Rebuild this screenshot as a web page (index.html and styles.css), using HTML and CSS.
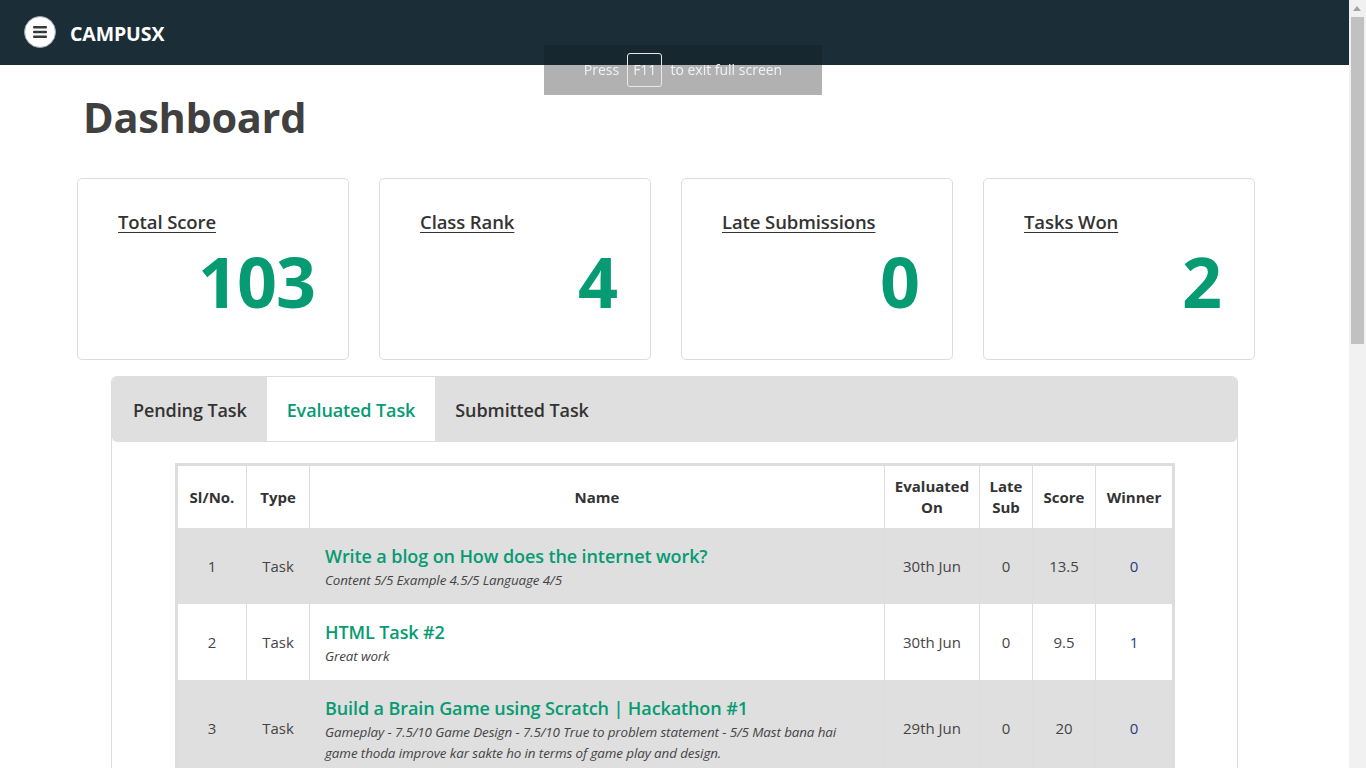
FILE: index.html
```html
<!DOCTYPE html>
<html lang="en">
<head>
<meta charset="utf-8">
<title>CampusX Dashboard</title>
<link rel="stylesheet" href="styles.css">
</head>
<body>
<header class="topbar">
  <span class="menu-btn">
    <svg width="32" height="32" viewBox="0 0 32 32"><circle cx="16" cy="16" r="15.5" fill="#fff" stroke="#9aa3a8" stroke-width="1"/><rect x="9" y="10" width="14" height="2.4" rx="1" fill="#3a3a3a"/><rect x="9" y="14.8" width="14" height="2.4" rx="1" fill="#3a3a3a"/><rect x="9" y="19.6" width="14" height="2.4" rx="1" fill="#3a3a3a"/></svg>
  </span>
  <span class="brand">CAMPUSX</span>
</header>

<main class="page">
  <h1 class="title">Dashboard</h1>

  <section class="cards">
    <div class="card"><a class="card-label">Total Score</a><div class="card-value">103</div></div>
    <div class="card"><a class="card-label">Class Rank</a><div class="card-value">4</div></div>
    <div class="card"><a class="card-label">Late Submissions</a><div class="card-value">0</div></div>
    <div class="card"><a class="card-label">Tasks Won</a><div class="card-value">2</div></div>
  </section>

  <section class="panel">
    <nav class="tabs">
      <span class="tab">Pending Task</span>
      <span class="tab active">Evaluated Task</span>
      <span class="tab">Submitted Task</span>
    </nav>
    <div class="panel-body">
      <table class="tasks">
        <colgroup>
          <col class="c-sl"><col class="c-type"><col class="c-name"><col class="c-eval"><col class="c-late"><col class="c-score"><col class="c-win">
        </colgroup>
        <thead>
          <tr><th>Sl/No.</th><th>Type</th><th>Name</th><th>Evaluated On</th><th>Late Sub</th><th>Score</th><th>Winner</th></tr>
        </thead>
        <tbody>
          <tr class="odd">
            <td>1</td><td>Task</td>
            <td class="name"><a class="task-title">Write a blog on How does the internet work?</a><div class="task-note">Content 5/5 Example 4.5/5 Language 4/5</div></td>
            <td>30th Jun</td><td>0</td><td>13.5</td><td class="win">0</td>
          </tr>
          <tr>
            <td>2</td><td>Task</td>
            <td class="name"><a class="task-title">HTML Task #2</a><div class="task-note">Great work</div></td>
            <td>30th Jun</td><td>0</td><td>9.5</td><td class="win">1</td>
          </tr>
          <tr class="odd">
            <td>3</td><td>Task</td>
            <td class="name"><a class="task-title">Build a Brain Game using Scratch | Hackathon #1</a><div class="task-note">Gameplay - 7.5/10 Game Design - 7.5/10 True to problem statement - 5/5 Mast bana hai game thoda improve kar sakte ho in terms of game play and design.</div></td>
            <td>29th Jun</td><td>0</td><td>20</td><td class="win">0</td>
          </tr>
        </tbody>
      </table>
    </div>
  </section>
</main>

<div class="fs-toast">Press <span class="key">F11</span> to exit full screen</div>

<div class="scrollbar"><span class="sb-arrow"></span><span class="sb-thumb"></span></div>
</body>
</html>
```

FILE: styles.css
```css
html, body {
  margin: 0;
  padding: 0;
  overflow: hidden;
  height: 100%;
}
body {
  font-family: "Open Sans", "Liberation Sans", sans-serif;
  color: #333;
  background: #fff;
  width: 1349px;
}

.topbar {
  height: 65px;
  background: #1b2d36;
  display: flex;
  align-items: center;
  padding-left: 24px;
  box-sizing: border-box;
}
.menu-btn {
  display: flex;
  width: 32px;
  height: 32px;
  margin-top: -2px;
}
.brand {
  color: #fff;
  font-weight: 700;
  font-size: 19.5px;
  letter-spacing: -0.1px;
  margin-left: 14px;
  margin-top: 1px;
}

.page {
  padding-left: 77px;
}
.title {
  margin: 0;
  padding: 26px 0 0 6px;
  font-size: 41.5px;
  font-weight: 700;
  color: #404040;
  line-height: 52px;
  letter-spacing: -0.3px;
}

.cards {
  display: flex;
  gap: 30px;
  margin-top: 35px;
}
.card {
  width: 272px;
  height: 182px;
  box-sizing: border-box;
  border: 1px solid #dcdcdc;
  border-radius: 5px;
  padding: 30px 33px 0 40px;
  display: flex;
  flex-direction: column;
}
.card-label {
  font-size: 18.5px;
  font-weight: 600;
  color: #333;
  text-decoration: underline;
  text-underline-offset: 3px;
  line-height: 26px;
  letter-spacing: -0.1px;
  align-self: flex-start;
}
.card-value {
  text-align: right;
  font-size: 70px;
  font-weight: 700;
  color: #069b72;
  line-height: 80px;
  margin-top: 6px;
  letter-spacing: -1px;
}

.panel {
  width: 1127px;
  margin: 16px 0 0 34px;
  border: 1px solid #ddd;
  border-radius: 6px;
  box-sizing: border-box;
  border-bottom: none;
}
.tabs {
  display: flex;
  background: #dfdfdf;
  border-radius: 5px;
  padding: 0;
  height: 65px;
}
.tab {
  padding: 0 20px;
  line-height: 66px;
  font-size: 18px;
  font-weight: 600;
  color: #333;
  letter-spacing: -0.1px;
}
.tab:first-child { padding-left: 21px; }
.tab.active {
  background: #fff;
  color: #069b72;
  height: 64px;
  line-height: 66px;
}
.panel-body {
  padding: 21px 0 0 63px;
}

.tasks {
  width: 1000px;
  table-layout: fixed;
  border-collapse: separate;
  border-spacing: 0;
  border: 3px solid #ddd;
  border-bottom: none;
  font-size: 15px;
}
.c-sl { width: 69px; }
.c-type { width: 63px; }
.c-name { width: 575px; }
.c-eval { width: 95px; }
.c-late { width: 53px; }
.c-score { width: 63px; }
.c-win { width: 76px; }

.tasks th, .tasks td {
  border-right: 1px solid #ddd;
  text-align: center;
  vertical-align: middle;
}
.tasks th:last-child, .tasks td:last-child { border-right: none; }
.tasks th {
  font-weight: 700;
  padding: 10px 4px;
  line-height: 21px;
  height: 42px;
  color: #333;
  background: #fff;
}
.tasks td {
  color: #444;
  padding: 15px 4px;
  line-height: 21px;
  height: 46px;
}
.tasks tr.odd td { background: #dfdfdf; }
.tasks td.name {
  text-align: left;
  padding: 16px 30px 13px 15px;
}
.task-title {
  display: block;
  color: #069b72;
  font-size: 18px;
  font-weight: 600;
  line-height: 25px;
  letter-spacing: -0.1px;
}
.task-note {
  font-style: italic;
  font-size: 13.4px;
  color: #444;
  line-height: 21px;
  margin-top: 1px;
  letter-spacing: -0.1px;
}
.tasks td.win { color: #2b3a80; }

.fs-toast {
  position: fixed;
  left: 544px;
  top: 45px;
  width: 278px;
  height: 50px;
  box-sizing: border-box;
  background: linear-gradient(to bottom, rgba(20, 30, 35, 0.35) 0, rgba(20, 30, 35, 0.35) 20px, #b1b1b1 20px);
  color: #f2f2f2;
  font-size: 14px;
  display: flex;
  align-items: center;
  justify-content: center;
  gap: 8px;
  padding-bottom: 1px;
}
.key {
  border: 1px solid #e8e8e8;
  border-radius: 3px;
  padding: 0 5px;
  height: 34px;
  line-height: 32px;
  box-sizing: border-box;
  display: inline-block;
}

.scrollbar {
  position: fixed;
  top: 0;
  right: 0;
  width: 17px;
  height: 768px;
  background: #f1f1f1;
}
.sb-arrow {
  position: absolute;
  left: 4px;
  top: 6px;
  width: 0;
  height: 0;
  border-left: 4.5px solid transparent;
  border-right: 4.5px solid transparent;
  border-bottom: 5px solid #a3a3a3;
}
.sb-thumb {
  position: absolute;
  left: 2px;
  top: 17px;
  width: 13px;
  height: 327px;
  background: #c1c1c1;
}
```
